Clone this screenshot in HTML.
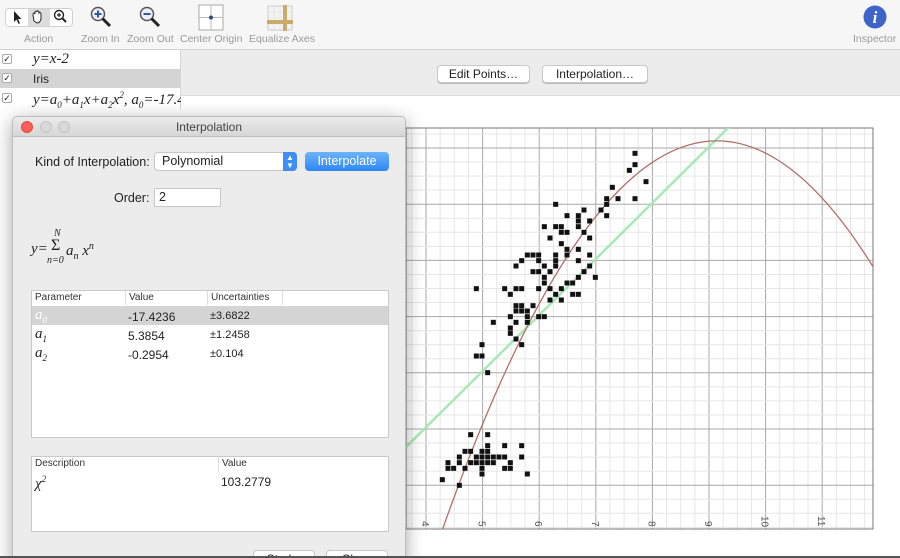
<!DOCTYPE html>
<html style="width:900px;height:558px;overflow:hidden"><head><meta charset="utf-8">
<style>
*{margin:0;padding:0;box-sizing:border-box}
body{width:900px;height:558px;overflow:hidden;background:#fff;font-family:"Liberation Sans",sans-serif;font-size:12px;color:#222;position:relative}
.abs{position:absolute}
.tb{left:0;top:0;width:900px;height:50px;background:#f6f6f6;border-bottom:1px solid #d0d0d0}
.lbl{position:absolute;top:33px;font-size:10.5px;color:#9a9a9a;white-space:nowrap}
.side{left:0;top:50px;width:181px;height:60px;background:#fff;border-right:1px solid #d8d8d8}
.row{position:absolute;left:0;width:181px;height:19px}
.cb{position:absolute;left:2px;top:4px;width:10px;height:10px;border:1px solid #aaa;border-radius:2px;background:#fff;font-size:9px;line-height:8px;text-align:center}
.m{font-family:"Liberation Serif",serif;font-size:15px;font-style:italic}
.btn{position:absolute;height:18px;background:#fff;border:1px solid #c8c8c8;border-radius:4px;font-size:12px;text-align:center;line-height:16px;box-shadow:0 1px 0 #bbb}
.dlg{left:12px;top:116px;width:394px;height:450px;background:#ececec;border-radius:5px 5px 0 0;box-shadow:0 4px 18px rgba(0,0,0,.35);border:1px solid #bdbdbd}
.tbl{position:absolute;background:#fff;border:1px solid #c9c9c9}
.th{position:absolute;top:0;height:14px;font-size:10px;color:#333;line-height:14px}
</style></head><body>
<div class="abs tb">
  <div class="abs" style="left:5px;top:8px;width:68px;height:19px;border:1px solid #d0d0d0;border-radius:4px;background:#fff"></div>
  <div class="abs" style="left:28px;top:9px;width:22px;height:17px;background:#dcdcdc"></div>
  <svg class="abs" style="left:0;top:0" width="320" height="32">
    <path d="M14 11 L14 22 L16.5 19.5 L18.5 24 L20 23.3 L18 19 L21.5 19 Z" fill="#222"/>
    <path d="M34 21 Q33 16 33 14 Q34 12 35 14 L35 12 Q36 10 37 12 L37 11.5 Q38 10 39 12 L39 13 Q40 11.5 41 13.5 L41 19 Q40 23 37 23 Z" fill="#fff" stroke="#222" stroke-width="1"/>
    <circle cx="59" cy="15" r="4.5" fill="#fff" stroke="#222" stroke-width="1.4"/><path d="M62.5 18.5 L66 22" stroke="#222" stroke-width="2"/><path d="M57 15h4M59 13v4" stroke="#222" stroke-width="1.2"/>
    <circle cx="98" cy="14" r="6.5" fill="#eef" stroke="#555" stroke-width="1.5"/><path d="M102.5 18.5 L110 26" stroke="#222" stroke-width="3"/><path d="M94.5 14h7M98 10.5v7" stroke="#2c5a9a" stroke-width="2"/>
    <circle cx="147" cy="14" r="6.5" fill="#eef" stroke="#555" stroke-width="1.5"/><path d="M151.5 18.5 L159 26" stroke="#222" stroke-width="3"/><path d="M143.5 14h7" stroke="#2c5a9a" stroke-width="2"/>
    <rect x="199" y="5" width="24" height="25" fill="#fff" stroke="#aaa"/><path d="M211 5v25M199 17.5h24" stroke="#bbb"/><circle cx="211" cy="17.5" r="2" fill="#2a4a7a"/>
    <rect x="268" y="6" width="24" height="24" fill="#f4f4f4" stroke="#ccc"/><path d="M268 12h24M268 18h24M268 24h24M274 6v24M280 6v24M286 6v24" stroke="#ddd" stroke-width=".6"/>
    <rect x="283" y="5" width="4" height="26" fill="#c9ab6a"/><rect x="267" y="20" width="26" height="4" fill="#c9ab6a"/>
  </svg>
  <div class="lbl" style="left:24px">Action</div>
  <div class="lbl" style="left:81px">Zoom In</div>
  <div class="lbl" style="left:127px">Zoom Out</div>
  <div class="lbl" style="left:180px">Center Origin</div>
  <div class="lbl" style="left:249px">Equalize Axes</div>
  <svg class="abs" style="left:863px;top:5px" width="24" height="24"><circle cx="12" cy="12" r="11.5" fill="#3e63c9"/><text x="12" y="18" text-anchor="middle" fill="#fff" font-family="Liberation Serif" font-style="italic" font-weight="bold" font-size="17">i</text></svg>
  <div class="lbl" style="left:853px">Inspector</div>
</div>
<div class="abs" style="left:181px;top:50px;width:719px;height:46px;background:#ececec;border-bottom:1px solid #ddd"></div>
<div class="btn" style="left:437px;top:65px;width:93px">Edit Points…</div>
<div class="btn" style="left:542px;top:65px;width:106px">Interpolation…</div>
<div class="abs side">
  <div class="row" style="top:0"><div class="cb">✓</div><span class="m abs" style="left:33px;top:1px">y=x-2</span></div>
  <div class="row" style="top:19px;background:#d4d4d4"><div class="cb">✓</div><span class="abs" style="left:33px;top:3px;font-size:12px">Iris</span></div>
  <div class="row" style="top:39px;overflow:hidden"><div class="cb">✓</div><span class="m abs" style="left:33px;top:1px;white-space:nowrap">y=a<sub style="font-size:9px">0</sub>+a<sub style="font-size:9px">1</sub>x+a<sub style="font-size:9px">2</sub>x<sup style="font-size:9px">2</sup>, a<sub style="font-size:9px">0</sub>=-17.4</span></div>
</div>
<svg id="plot" class="abs" style="left:0;top:0" width="900" height="558"></svg>
<div class="abs dlg">
  <div class="abs" style="left:0;top:0;width:392px;height:20px;background:linear-gradient(#ebebeb,#d6d6d6);border-bottom:1px solid #c0c0c0;border-radius:5px 5px 0 0"></div>
  <div class="abs" style="left:8px;top:4px;width:12px;height:12px;border-radius:6px;background:#fc5f57;border:1px solid #de4a42"></div>
  <div class="abs" style="left:27px;top:4px;width:12px;height:12px;border-radius:6px;background:#d8d8d8;border:1px solid #c4c4c4"></div>
  <div class="abs" style="left:45px;top:4px;width:12px;height:12px;border-radius:6px;background:#d8d8d8;border:1px solid #c4c4c4"></div>
  <div class="abs" style="left:0;top:3px;width:392px;text-align:center;font-size:12px;color:#444">Interpolation</div>
  <div class="abs" style="left:22px;top:38px;font-size:12.5px">Kind of Interpolation:</div>
  <div class="abs" style="left:141px;top:35px;width:143px;height:19px;background:#fff;border:1px solid #c8c8c8;border-radius:4px;font-size:12.5px;line-height:17px;padding-left:7px">Polynomial</div>
  <div class="abs" style="left:270px;top:35px;width:14px;height:19px;background:#3e8ef6;border-radius:0 4px 4px 0;color:#fff;font-size:8px;line-height:8px;text-align:center;padding-top:2px">▲<br>▼</div>
  <div class="abs" style="left:292px;top:35px;width:84px;height:19px;background:linear-gradient(#6cb3fa,#2f86f5);border-radius:4px;color:#fff;font-size:12.5px;line-height:19px;text-align:center">Interpolate</div>
  <div class="abs" style="left:101px;top:74px;font-size:12.5px">Order:</div>
  <div class="abs" style="left:141px;top:71px;width:67px;height:19px;background:#fff;border:1px solid #c8c8c8;font-size:12.5px;line-height:17px;padding-left:4px">2</div>
  <div class="abs m" style="left:18px;top:124px;font-size:15px">y=</div>
  <div class="abs m" style="left:38px;top:120px;font-size:16px;font-style:normal">Σ</div>
  <div class="abs m" style="left:41px;top:111px;font-size:10px">N</div>
  <div class="abs m" style="left:34px;top:138px;font-size:10px">n=0</div>
  <div class="abs m" style="left:53px;top:124px">a<sub style="font-size:10px">n</sub> x<sup style="font-size:10px">n</sup></div>
  <div class="tbl" style="left:18px;top:173px;width:358px;height:148px">
    <div class="th" style="left:3px">Parameter</div>
    <div class="th" style="left:93px;border-left:1px solid #ddd;padding-left:3px">Value</div>
    <div class="th" style="left:175px;border-left:1px solid #ddd;padding-left:3px">Uncertainties</div>
    <div class="th" style="left:250px;border-left:1px solid #ddd;width:1px"></div>
    <div class="abs" style="left:0;top:15px;width:356px;height:19px;background:#d4d4d4"></div>
    <div class="abs m" style="left:3px;top:16px;color:#fff">a<sub style="font-size:9px">0</sub></div>
    <div class="abs" style="left:96px;top:19px;font-size:12px">-17.4236</div>
    <div class="abs" style="left:178px;top:19px;font-size:11px">±3.6822</div>
    <div class="abs m" style="left:3px;top:35px">a<sub style="font-size:9px">1</sub></div>
    <div class="abs" style="left:96px;top:38px;font-size:12px">5.3854</div>
    <div class="abs" style="left:178px;top:38px;font-size:11px">±1.2458</div>
    <div class="abs m" style="left:3px;top:54px">a<sub style="font-size:9px">2</sub></div>
    <div class="abs" style="left:96px;top:57px;font-size:12px">-0.2954</div>
    <div class="abs" style="left:178px;top:57px;font-size:11px">±0.104</div>
  </div>
  <div class="tbl" style="left:18px;top:339px;width:358px;height:76px">
    <div class="th" style="left:3px">Description</div>
    <div class="th" style="left:186px;border-left:1px solid #ddd;padding-left:3px">Value</div>
    <div class="abs m" style="left:3px;top:17px">χ<sup style="font-size:9px">2</sup></div>
    <div class="abs" style="left:189px;top:18px;font-size:12px">103.2779</div>
  </div>
  <div class="btn" style="left:240px;top:433px;width:62px;height:20px">Stroke</div>
  <div class="btn" style="left:313px;top:433px;width:62px;height:20px">Close</div>
</div>
<div class="abs" style="left:0;top:556px;width:900px;height:2px;background:#555"></div>
<script>
var s='';
var L=406,T=128,R=873,B=529,ux=56.6,x4=426;
for(var i=-2;i<40;i++){var x=x4+i*ux/4;if(x<L||x>R)continue;s+='<line x1="'+x+'" y1="'+T+'" x2="'+x+'" y2="'+B+'" stroke="'+(i%4==0?'#a8a8a8':'#e6e6e6')+'" stroke-width="1"/>';}
for(var j=-4;j<40;j++){var y=148+j*56.2/4;if(y<T||y>B)continue;s+='<line x1="'+L+'" y1="'+y+'" x2="'+R+'" y2="'+y+'" stroke="'+(j%4==0?'#a8a8a8':'#e6e6e6')+'" stroke-width="1"/>';}
s+='<rect x="'+L+'" y="'+T+'" width="'+(R-L)+'" height="'+(B-T)+'" fill="none" stroke="#777"/>';
s+='<defs><clipPath id="c"><rect x="'+L+'" y="'+T+'" width="'+(R-L)+'" height="'+(B-T)+'"/></clipPath></defs>';
s+='<g clip-path="url(#c)"><line x1="400" y1="453" x2="732" y2="124" stroke="#a9e8b4" stroke-width="2.5"/>';
s+='<path d="M440 536.5 Q656.5 -82.3 873 266.7" fill="none" stroke="#b0706a" stroke-width="1.3"/></g>';
var p=[705,100,705,134,688,151,738,185,637,202,620,236,654,236,705,236,620,253,603,270,620,287,467,253,552,270,501,287,535,287,535,303,569,303,535,320,433,320,467,320,484,320,484,337,501,337,552,337,450,354,569,354,484,371,501,388,535,388,382,405,399,405,416,405,467,405,501,405,569,405,365,422,416,422,467,422,535,422,348,438,433,438,467,438,569,438,399,455,416,455,450,455,552,455,433,472,535,472,586,472,433,489,501,489,518,489,229,506,314,506,348,506,365,506,416,506,450,506,484,506,331,523,467,523,518,523,535,523,450,540,484,540,348,557,365,557,399,557,348,573,365,573,382,573,331,590,382,590,416,590,433,590,280,607,348,607,382,607,331,624,331,640,348,657,246,674,365,674,229,708,246,708,263,758,212,944,263,944,314,977,365,977,263,977,195,994,212,994,246,994,263,994,178,1011,229,1011,246,1011,263,1011,280,1011,297,1011,314,1011,365,1011,144,1028,178,1028,212,1028,229,1028,246,1028,263,1028,280,1028,331,1028,144,1045,161,1045,195,1045,246,1045,314,1045,331,1045,246,1062,382,1062,127,1079,178,1096];
for(var k=0;k<p.length;k+=2){var x=400+p[k]/3,y=120+p[k+1]/3;s+='<rect x="'+(x-2.5)+'" y="'+(y-2.5)+'" width="5" height="5" fill="#111"/>';}
var labs=['4','5','6','7','8','9','10','11'];
for(var i=0;i<8;i++){var x=x4+i*ux;s+='<text transform="translate('+(x-4)+','+(i<6?521:516)+') rotate(90)" font-size="10" fill="#555" font-family="Liberation Sans">'+labs[i]+'</text>';}
document.getElementById('plot').innerHTML=s;
</script>
</body></html>
